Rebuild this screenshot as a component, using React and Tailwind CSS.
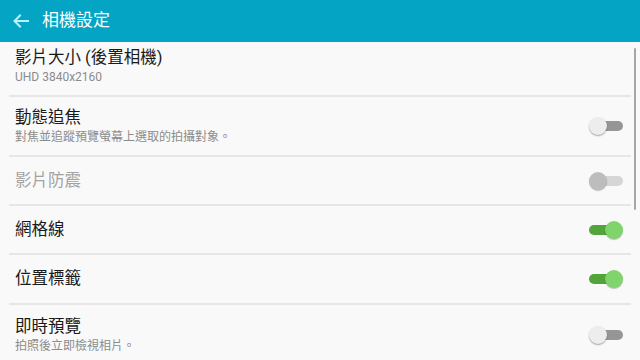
import React from 'react';

const font = {fontFamily: 'Roboto, "Noto Sans CJK TC", sans-serif'};

function Toggle({on, disabled}) {
  if (disabled) {
    return (
      <div className="relative w-[34px] h-[18px] shrink-0">
        <div className="absolute left-[5px] right-0 top-[4px] h-[10px] rounded-full bg-[#d6d6d6]" />
        <div className="absolute left-0 top-0 w-[18px] h-[18px] rounded-full bg-[#bdbdbd] shadow-[0_1px_1px_rgba(0,0,0,0.25)]" />
      </div>
    );
  }
  if (on) {
    return (
      <div className="relative w-[34px] h-[18px] shrink-0">
        <div className="absolute left-0 right-[5px] top-[4px] h-[10px] rounded-full bg-[#54a43c]" />
        <div className="absolute right-0 top-0 w-[18px] h-[18px] rounded-full bg-[#80d46c] shadow-[0_1px_1px_rgba(0,0,0,0.25)]" />
      </div>
    );
  }
  return (
    <div className="relative w-[34px] h-[18px] shrink-0">
      <div className="absolute left-[5px] right-0 top-[4px] h-[10px] rounded-full bg-[#969696]" />
      <div className="absolute left-0 top-0 w-[18px] h-[18px] rounded-full bg-[#ededed] shadow-[0_1px_1.5px_rgba(0,0,0,0.35)]" />
    </div>
  );
}

function Row({title, sub, toggle, disabled, className}) {
  return (
    <div className={'flex items-center pl-[15px] pr-[17px] ' + className}>
      <div className="flex-1 flex flex-col">
        <div className={'text-[16.5px] leading-[20px] ' + (disabled ? 'text-[#a3a3a3]' : 'text-[#1a1a1a]')}>
          {title}
        </div>
        {sub && <div className="text-[12px] leading-[16px] mt-[1px] text-[#8c8c8c]">{sub}</div>}
      </div>
      {toggle}
    </div>
  );
}

const Divider = () => <div className="h-[2px] mx-[9px] bg-[#e6e6e6]" />;

export default function App() {
  return (
    <div className="w-[640px] h-[360px] overflow-hidden bg-[#f9f9f9] relative" style={font}>
      {/* header */}
      <div className="h-[42px] bg-[#03a4c4] flex items-center pl-[13px]">
        <svg width="16" height="14" viewBox="0 0 16 14" fill="none" stroke="#b9f2f8" strokeWidth="2" strokeLinecap="square">
          <path d="M2 7h13M7 1.5L1.5 7 7 12.5" />
        </svg>
        <span className="ml-[13px] text-white text-[17px]">相機設定</span>
      </div>

      <Row className="h-[53px] items-start pt-[6px]" title="影片大小 (後置相機)" sub="UHD 3840x2160" />
      <Divider />
      <Row
        className="h-[58px]"
        title="動態追焦"
        sub="對焦並追蹤預覽螢幕上選取的拍攝對象。"
        toggle={<Toggle />}
      />
      <Divider />
      <Row className="h-[47px]" title="影片防震" disabled toggle={<Toggle disabled />} />
      <Divider />
      <Row className="h-[47px]" title="網格線" toggle={<Toggle on />} />
      <Divider />
      <Row className="h-[48px]" title="位置標籤" toggle={<Toggle on />} />
      <Divider />
      <Row className="h-[57px] pt-[3px]" title="即時預覽" sub="拍照後立即檢視相片。" toggle={<Toggle />} />

      {/* scrollbar */}
      <div className="absolute right-[4px] top-[48px] w-[2px] h-[162px] bg-[#a6a6a6] rounded-full" />
    </div>
  );
}
